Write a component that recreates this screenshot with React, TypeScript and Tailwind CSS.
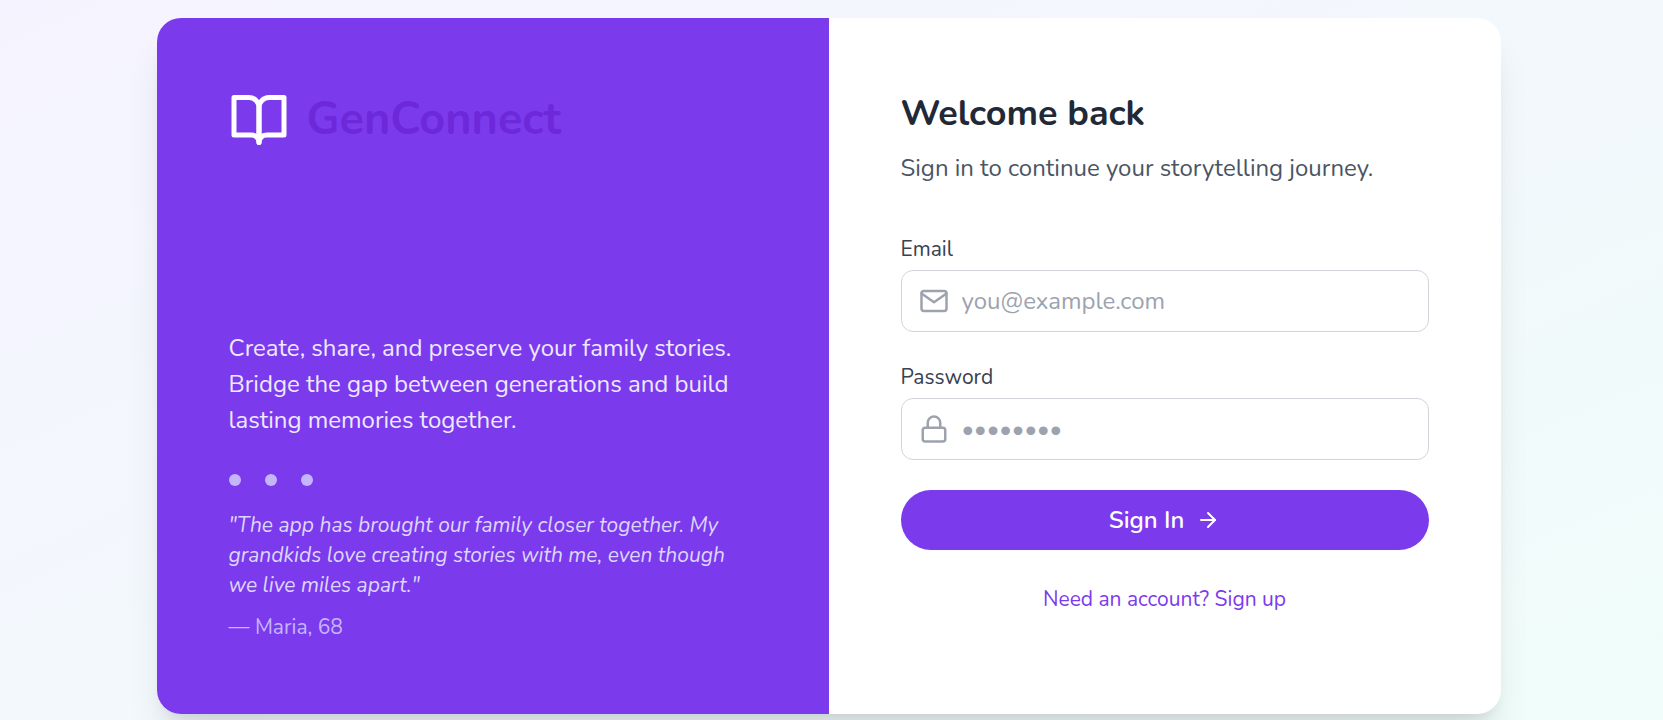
import type { InputHTMLAttributes, ReactNode } from "react";

function BookIcon() {
  return (
    <svg className="size-[60px] text-white" viewBox="0 0 24 24" fill="none" stroke="currentColor" strokeWidth="2" strokeLinecap="round" strokeLinejoin="round" aria-hidden="true">
      <path d="M2 3h6a4 4 0 0 1 4 4v14a3 3 0 0 0-3-3H2z" />
      <path d="M22 3h-6a4 4 0 0 0-4 4v14a3 3 0 0 1 3-3h7z" />
    </svg>
  );
}

function MailIcon() {
  return (
    <svg className="size-[30px]" viewBox="0 0 24 24" fill="none" stroke="currentColor" strokeWidth="2" strokeLinecap="round" strokeLinejoin="round" aria-hidden="true">
      <path d="M4 4h16c1.1 0 2 .9 2 2v12c0 1.1-.9 2-2 2H4c-1.1 0-2-.9-2-2V6c0-1.1.9-2 2-2z" />
      <polyline points="22,6 12,13 2,6" />
    </svg>
  );
}

function LockIcon() {
  return (
    <svg className="size-[30px]" viewBox="0 0 24 24" fill="none" stroke="currentColor" strokeWidth="2" strokeLinecap="round" strokeLinejoin="round" aria-hidden="true">
      <rect x="3" y="11" width="18" height="11" rx="2" ry="2" />
      <path d="M7 11V7a5 5 0 0 1 10 0v4" />
    </svg>
  );
}

function ArrowIcon() {
  return (
    <svg className="size-6" viewBox="0 0 24 24" fill="none" stroke="currentColor" strokeWidth="2" strokeLinecap="round" strokeLinejoin="round" aria-hidden="true">
      <line x1="5" y1="12" x2="19" y2="12" />
      <polyline points="12 5 19 12 12 19" />
    </svg>
  );
}

type FieldProps = InputHTMLAttributes<HTMLInputElement> & {
  id: string;
  label: string;
  icon: ReactNode;
};

function Field({ id, label, icon, ...input }: FieldProps) {
  return (
    <div className="flex flex-col gap-1.5">
      <label htmlFor={id} className="text-[21px] leading-[30px] text-[#374151]">
        {label}
      </label>
      <div className="relative">
        <span className="pointer-events-none absolute inset-y-0 left-[18px] flex items-center text-[#9ca3af]">
          {icon}
        </span>
        <input
          id={id}
          className="block w-full rounded-xl border border-[#d1d5db] bg-white py-3 pr-4 pl-[60px] text-2xl leading-9 text-[#1f2937] placeholder:text-[#9ca3af] focus:outline-2 focus:outline-[#7c3aed]"
          {...input}
        />
      </div>
    </div>
  );
}

export default function App() {
  return (
    <div className="flex min-h-screen items-center justify-center bg-linear-to-br/srgb from-[#f5f3ff] to-[#f0fdfa] py-[18px] pr-6 pl-[18px] font-['Nunito',sans-serif]">
      <main className="grid w-full max-w-[1344px] overflow-hidden rounded-3xl bg-white shadow-[0_30px_38px_-8px_rgba(0,0,0,0.1),0_12px_15px_-9px_rgba(0,0,0,0.1)] md:grid-cols-2">
        <section className="flex flex-col justify-between gap-[180px] bg-[#7c3aed] p-[72px]">
          <div className="flex items-center gap-[18px]">
            <BookIcon />
            <h1 className="text-[45px] leading-[54px] font-bold text-[#6d28d9]">GenConnect</h1>
          </div>
          <div>
            <p className="text-2xl leading-9 text-[#ede9fe]">
              Create, share, and preserve your family stories. Bridge the gap between generations and build lasting
              memories together.
            </p>
            <div className="mt-9 flex gap-6">
              <span className="size-3 rounded-full bg-[#c4b5fd]" />
              <span className="size-3 rounded-full bg-[#c4b5fd]" />
              <span className="size-3 rounded-full bg-[#c4b5fd]" />
            </div>
            <figure className="mt-6">
              <blockquote className="text-[21px] leading-[30px] text-[#ddd6fe] italic">
                "The app has brought our family closer together. My grandkids love creating stories with me, even
                though we live miles apart."
              </blockquote>
              <figcaption className="mt-3 text-[21px] leading-[30px] text-[#c4b5fd]">— Maria, 68</figcaption>
            </figure>
          </div>
        </section>

        <section className="p-[72px]">
          <h2 className="text-4xl leading-[48px] font-bold text-[#1f2937]">Welcome back</h2>
          <p className="mt-3 text-2xl leading-9 text-[#4b5563]">Sign in to continue your storytelling journey.</p>
          <form className="mt-12 flex flex-col gap-[30px]" onSubmit={(e) => e.preventDefault()}>
            <Field id="email" label="Email" type="email" placeholder="you@example.com" icon={<MailIcon />} />
            <Field id="password" label="Password" type="password" placeholder="••••••••" icon={<LockIcon />} />
            <button
              type="submit"
              className="flex w-full items-center justify-center gap-3 rounded-full bg-[#7c3aed] px-6 py-3 text-2xl leading-9 font-semibold text-white hover:bg-[#6d28d9]"
            >
              Sign In
              <ArrowIcon />
            </button>
          </form>
          <p className="mt-[34px] text-center text-[21px] leading-[30px]">
            <a href="#signup" className="text-[#7c3aed] hover:text-[#6d28d9]">
              Need an account? Sign up
            </a>
          </p>
        </section>
      </main>
    </div>
  );
}
